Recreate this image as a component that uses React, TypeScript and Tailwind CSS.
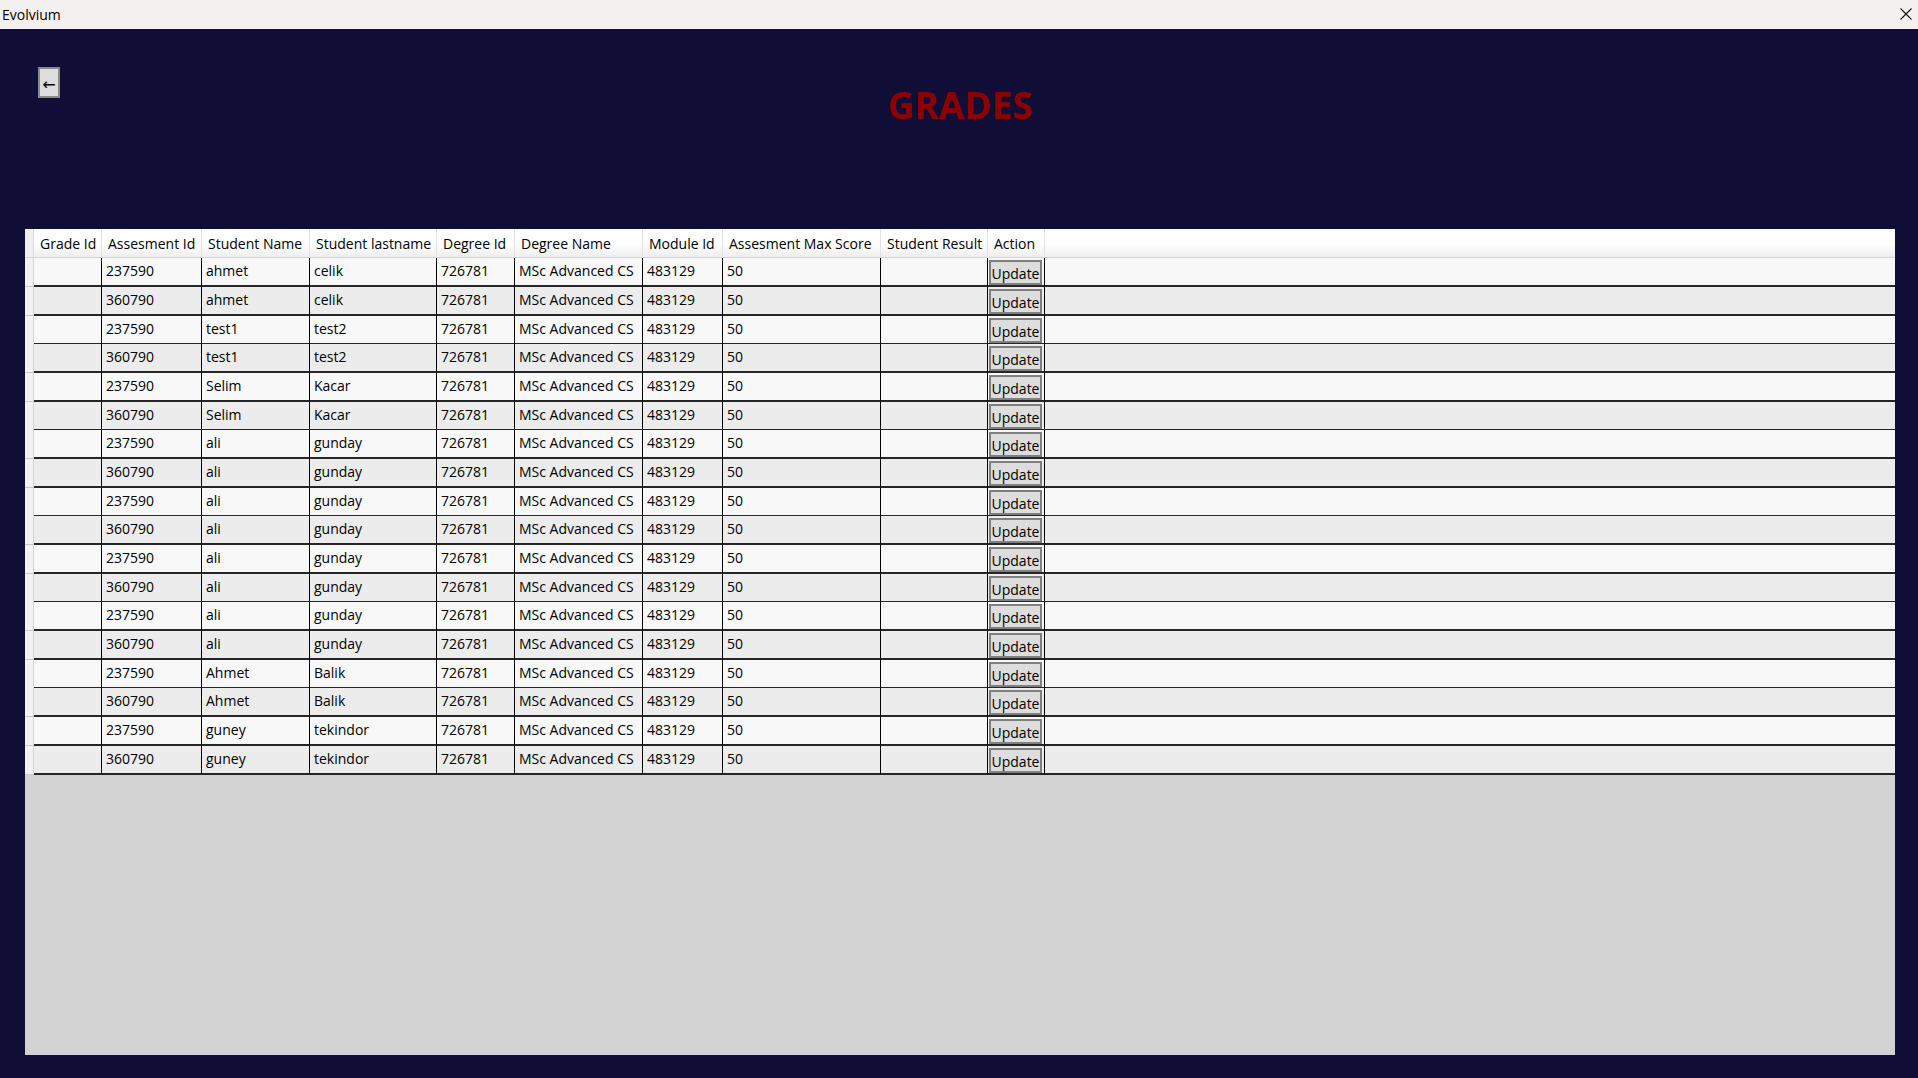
import React from "react";

// column widths taken from the reference grid (row header first, filler last)
const columns = [
    { key: "gradeId", label: "Grade Id" },
    { key: "assessmentId", label: "Assesment Id" },
    { key: "name", label: "Student Name" },
    { key: "lastname", label: "Student lastname" },
    { key: "degreeId", label: "Degree Id" },
    { key: "degreeName", label: "Degree Name" },
    { key: "moduleId", label: "Module Id" },
    { key: "maxScore", label: "Assesment Max Score" },
    { key: "result", label: "Student Result" },
    { key: "action", label: "Action" },
];

const gridCols =
    "grid grid-cols-[9px_68px_100px_108px_127px_78px_128px_80px_158px_107px_57px_1fr]";

const students: [string, string][] = [
    ["ahmet", "celik"],
    ["test1", "test2"],
    ["Selim", "Kacar"],
    ["ali", "gunday"],
    ["ali", "gunday"],
    ["ali", "gunday"],
    ["ali", "gunday"],
    ["Ahmet", "Balik"],
    ["guney", "tekindor"],
];

const rows = students.flatMap(([name, lastname]) =>
    ["237590", "360790"].map((assessmentId) => ({
        gradeId: "",
        assessmentId,
        name,
        lastname,
        degreeId: "726781",
        degreeName: "MSc Advanced CS",
        moduleId: "483129",
        maxScore: "50",
        result: "",
    }))
);

const font = { fontFamily: '"Open Sans", "Noto Sans", sans-serif' };

function TitleBar() {
    return (
        <div className="h-[29px] shrink-0 bg-[#f3f0ef] flex items-center justify-between pl-[2px] pr-[6px]">
            <span className="text-[14px] text-black leading-none">Evolvium</span>
            <svg width="12" height="12" viewBox="0 0 12 12" className="mb-[1px]">
                <path d="M0.5 0.5 L11.5 11.5 M11.5 0.5 L0.5 11.5" stroke="#111" strokeWidth="1.1" fill="none" />
            </svg>
        </div>
    );
}

function Cell({ children, last }: { children?: React.ReactNode; last?: boolean }) {
    return (
        <div
            className={
                "pl-[4px] pt-[3px] text-[14px] leading-[20px] text-black whitespace-nowrap overflow-hidden border-b-2 border-b-[#262626] " +
                (last ? "" : "border-r border-r-black")
            }
        >
            {children}
        </div>
    );
}

export default function App() {
    return (
        <div className="w-full h-[1078px] flex flex-col bg-[#100e36] overflow-hidden" style={font}>
            <TitleBar />

            <div className="flex-1 flex flex-col pl-[25px] pr-[23px]">
                {/* Header: back button + page title */}
                <div className="h-[200px] shrink-0 grid grid-cols-[1fr_auto_1fr] items-start">
                    <div>
                        <button className="mt-[38px] ml-[13px] w-[22px] h-[31px] bg-[#dddddd] border-2 border-[#8a8a8a] flex items-center justify-center pt-[4px] text-[16px] leading-none text-black">
                            <span style={{ fontFamily: '"DejaVu Sans", sans-serif' }}>←</span>
                        </button>
                    </div>
                    <h1 className="mt-[48px] text-[37px] font-bold text-[#8b0000] leading-normal">GRADES</h1>
                    <div />
                </div>

                {/* Data grid */}
                <div className="h-[826px] bg-[#d3d3d3] flex flex-col">
                    <div className={gridCols + " h-[29px] bg-linear-to-b from-white via-white to-[#ededed]"}>
                        <div className="bg-[#f0f0f0] border-r border-[#dcdcdc] border-b border-b-[#d5d5d5]" />
                        {columns.map((c) => (
                            <div
                                key={c.key}
                                className="flex items-center pl-[6px] pt-[1px] text-[14px] text-black whitespace-nowrap border-r border-[#e2e2e2] border-b border-b-[#d5d5d5]"
                            >
                                {c.label}
                            </div>
                        ))}
                        <div className="border-b border-b-[#d5d5d5]" />
                    </div>

                    {rows.map((r, i) => (
                        <div
                            key={i}
                            className={
                                gridCols +
                                (i % 3 === 2 ? " h-[28px]" : " h-[29px]") +
                                (i % 2 === 0 ? " bg-[#f8f8f8]" : " bg-[#ececec]")
                            }
                        >
                            <div className="bg-[#f2f2f2] border-r border-[#d4d4d4] border-b border-b-[#c8c8c8]" />
                            <Cell>{r.gradeId}</Cell>
                            <Cell>{r.assessmentId}</Cell>
                            <Cell>{r.name}</Cell>
                            <Cell>{r.lastname}</Cell>
                            <Cell>{r.degreeId}</Cell>
                            <Cell>{r.degreeName}</Cell>
                            <Cell>{r.moduleId}</Cell>
                            <Cell>{r.maxScore}</Cell>
                            <Cell>{r.result}</Cell>
                            <div className="pl-[1px] pt-[2px] border-b-2 border-b-[#262626] border-r border-r-black">
                                <button className="w-[53px] h-[25px] bg-[#dddddd] border-2 border-[#7f7f7f] text-[14px] leading-[19px] text-black flex items-center justify-center pt-[1px]">
                                    Update
                                </button>
                            </div>
                            <Cell last />
                        </div>
                    ))}
                </div>
            </div>
        </div>
    );
}
